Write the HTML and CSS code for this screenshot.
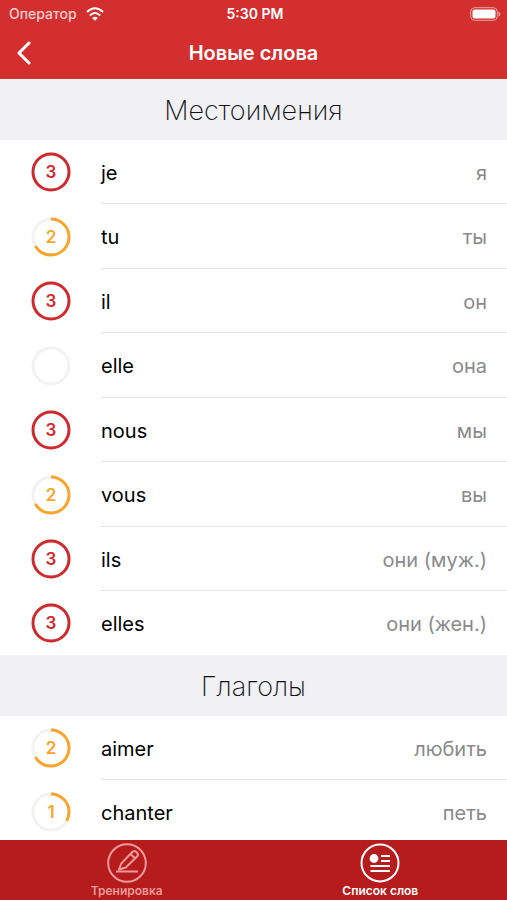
FILE: index.html
```
<!DOCTYPE html>
<html lang="ru">
<head>
    <meta charset="UTF-8">
    <meta name="viewport" content="width=device-width, initial-scale=1.0">
    <title>Новые слова</title>
    <link rel="stylesheet" href="styles.css">
</head>
<body>

    <!-- Header -->
    <header class="header">
        <div class="status">
            <div class="carrier">
                <span>Оператор</span>
                <svg class="wifi" viewBox="0 0 18 14">
                    <path d="M1 5 Q9 -2.600 17 5" />
                    <path d="M3.800 8.500 Q9 3.500 14.200 8.500" />
                    <path class="dot" d="M9 13.800 L6.200 10.900 Q9 8.400 11.800 10.900 Z" />
                </svg>
            </div>
            <span class="time">5:30 PM</span>
            <svg class="battery" viewBox="0 0 31 14">
                <rect class="shell" x="0.700" y="0.700" width="26.600" height="12.600" rx="4" />
                <rect class="charge" x="2.500" y="2.500" width="23" height="9" rx="2" />
                <path class="cap" d="M28.500 4.500 Q30.500 5.500 30.500 7 Q30.500 8.500 28.500 9.500 Z" />
            </svg>
        </div>
        <div class="navbar">
            <button class="back" type="button" aria-label="Назад">
                <svg viewBox="0 0 16 24"><path d="M13 2 L3 12 L13 22" /></svg>
            </button>
            <h1>Новые слова</h1>
        </div>
    </header>

    <!-- Word list -->
    <main class="content">
        <section>
            <h2>Местоимения</h2>
            <ul class="words">
                <li class="level-3">
                    <div class="progress">
                        <svg viewBox="0 0 40 40"><circle class="track" cx="20" cy="20" r="18" /><circle class="bar" cx="20" cy="20" r="18" pathLength="3" /></svg>
                        <span>3</span>
                    </div>
                    <div class="pair"><span lang="fr">je</span><span class="translation">я</span></div>
                </li>
                <li class="level-2">
                    <div class="progress">
                        <svg viewBox="0 0 40 40"><circle class="track" cx="20" cy="20" r="18" /><circle class="bar" cx="20" cy="20" r="18" pathLength="3" /></svg>
                        <span>2</span>
                    </div>
                    <div class="pair"><span lang="fr">tu</span><span class="translation">ты</span></div>
                </li>
                <li class="level-3">
                    <div class="progress">
                        <svg viewBox="0 0 40 40"><circle class="track" cx="20" cy="20" r="18" /><circle class="bar" cx="20" cy="20" r="18" pathLength="3" /></svg>
                        <span>3</span>
                    </div>
                    <div class="pair"><span lang="fr">il</span><span class="translation">он</span></div>
                </li>
                <li>
                    <div class="progress">
                        <svg viewBox="0 0 40 40"><circle class="track" cx="20" cy="20" r="18" /></svg>
                    </div>
                    <div class="pair"><span lang="fr">elle</span><span class="translation">она</span></div>
                </li>
                <li class="level-3">
                    <div class="progress">
                        <svg viewBox="0 0 40 40"><circle class="track" cx="20" cy="20" r="18" /><circle class="bar" cx="20" cy="20" r="18" pathLength="3" /></svg>
                        <span>3</span>
                    </div>
                    <div class="pair"><span lang="fr">nous</span><span class="translation">мы</span></div>
                </li>
                <li class="level-2">
                    <div class="progress">
                        <svg viewBox="0 0 40 40"><circle class="track" cx="20" cy="20" r="18" /><circle class="bar" cx="20" cy="20" r="18" pathLength="3" /></svg>
                        <span>2</span>
                    </div>
                    <div class="pair"><span lang="fr">vous</span><span class="translation">вы</span></div>
                </li>
                <li class="level-3">
                    <div class="progress">
                        <svg viewBox="0 0 40 40"><circle class="track" cx="20" cy="20" r="18" /><circle class="bar" cx="20" cy="20" r="18" pathLength="3" /></svg>
                        <span>3</span>
                    </div>
                    <div class="pair"><span lang="fr">ils</span><span class="translation">они (муж.)</span></div>
                </li>
                <li class="level-3">
                    <div class="progress">
                        <svg viewBox="0 0 40 40"><circle class="track" cx="20" cy="20" r="18" /><circle class="bar" cx="20" cy="20" r="18" pathLength="3" /></svg>
                        <span>3</span>
                    </div>
                    <div class="pair"><span lang="fr">elles</span><span class="translation">они (жен.)</span></div>
                </li>
            </ul>
        </section>

        <section>
            <h2>Глаголы</h2>
            <ul class="words">
                <li class="level-2">
                    <div class="progress">
                        <svg viewBox="0 0 40 40"><circle class="track" cx="20" cy="20" r="18" /><circle class="bar" cx="20" cy="20" r="18" pathLength="3" /></svg>
                        <span>2</span>
                    </div>
                    <div class="pair"><span lang="fr">aimer</span><span class="translation">любить</span></div>
                </li>
                <li class="level-1">
                    <div class="progress">
                        <svg viewBox="0 0 40 40"><circle class="track" cx="20" cy="20" r="18" /><circle class="bar" cx="20" cy="20" r="18" pathLength="3" /></svg>
                        <span>1</span>
                    </div>
                    <div class="pair"><span lang="fr">chanter</span><span class="translation">петь</span></div>
                </li>
            </ul>
        </section>
    </main>

    <!-- Tab bar -->
    <nav class="tabs">
        <a href="#training">
            <svg viewBox="0 0 40 40">
                <circle cx="20" cy="20" r="18.800" />
                <path d="M9 28.500 H31" />
                <path d="M12 26.500 L14.300 20.500 L25.500 8.800 Q27.300 7.300 29 8.800 L30.300 10 Q31.700 11.600 30.300 13.300 L18.800 24.500 Z" />
                <path d="M23.500 11 L28.200 15.400" />
            </svg>
            <span>Тренировка</span>
        </a>
        <a href="#words" class="active">
            <svg viewBox="0 0 40 40">
                <circle cx="20" cy="20" r="18.500" />
                <circle class="fill" cx="14" cy="15.500" r="4.400" />
                <path d="M21 13 H30 M21 18 H30 M10.500 23 H30 M10.500 28 H30" />
            </svg>
            <span>Список слов</span>
        </a>
    </nav>

</body>
</html>
```

FILE: styles.css
```
* { margin: 0; padding: 0; box-sizing: border-box; }
body {
    font-family: Inter, 'Noto Sans', sans-serif;
    background: #fff;
    color: #000;
    height: 100vh;
    display: flex;
    flex-direction: column;
}
svg { display: block; fill: none; }

/* Header */
.header {
    background: #d32f2f;
    color: #fff;
    padding-bottom: 1px;
}
.status {
    display: grid;
    grid-template-columns: 1fr auto 1fr;
    align-items: center;
    height: 27px;
    padding: 0 6px 0 9px;
    font-size: 14px;
}
.carrier {
    display: flex;
    align-items: center;
    gap: 9px;
    color: #f8cfcf;
    font-weight: 500;
}
.wifi { width: 18px; height: 14px; stroke: #fff; stroke-width: 2; }
.wifi .dot { fill: #fff; stroke: none; }
.time { font-weight: 600; }
.battery { width: 31px; height: 14px; justify-self: end; }
.battery .shell { stroke: #eda3a3; stroke-width: 1; }
.battery .charge { fill: #fff; }
.battery .cap { fill: #eda3a3; }

.navbar {
    display: grid;
    grid-template-columns: 48px 1fr 48px;
    align-items: center;
    height: 51px;
}
.navbar h1 {
    font-size: 20px;
    font-weight: 600;
    text-align: center;
}
.back {
    display: flex;
    justify-content: center;
    padding: 12px;
    border: none;
    background: none;
    cursor: pointer;
}
.back svg {
    width: 16px;
    height: 24px;
    stroke: #fff;
    stroke-width: 3;
    stroke-linecap: round;
    stroke-linejoin: round;
}

/* Word list */
.content {
    flex: 1;
    min-height: 0;
    overflow-y: auto;
    scrollbar-width: none;
}
.content h2 {
    background: #f0f0f5;
    color: #111;
    padding-top: 3px;
    font-size: 27px;
    font-weight: 200;
    line-height: 58px;
    text-align: center;
}
.words { list-style: none; }
.words li {
    display: flex;
    gap: 30px;
    height: 64px;
    padding-left: 31px;
}
.words li:nth-child(even):not(:last-child) { height: 65px; }
.pair {
    flex: 1;
    display: flex;
    justify-content: space-between;
    align-items: center;
    padding: 2px 20px 0 0;
    border-bottom: 1px solid #e4e4e6;
    font-size: 20px;
}
.words li:last-child .pair { border-bottom: none; }
.translation { color: #8a8a8c; }

/* Progress ring */
.progress {
    display: grid;
    place-items: center;
    width: 40px;
    font-size: 17px;
    font-weight: 600;
}
.progress svg, .progress span { grid-area: 1 / 1; }
.progress svg {
    width: 40px;
    height: 40px;
    stroke-width: 3;
    transform: rotate(-90deg);
}
.track { stroke: #f2f2f2; }
.bar { stroke: currentColor; }
.level-3 .progress { color: #cf2b2f; }
.level-2 .progress, .level-1 .progress { color: #f9a52b; }
.level-2 .bar { stroke-dasharray: 2 1; }
.level-1 .bar { stroke-dasharray: 1 2; }

/* Tab bar */
.tabs {
    display: flex;
    height: 60px;
    background: #b71c1c;
}
.tabs a {
    flex: 1;
    display: flex;
    flex-direction: column;
    align-items: center;
    gap: 1px;
    padding-top: 3px;
    color: #ee9a9a;
    font-size: 12px;
    font-weight: 600;
    line-height: 14px;
    text-decoration: none;
}
.tabs .active { color: #fff; }
.tabs svg {
    width: 40px;
    height: 40px;
    stroke: currentColor;
    stroke-width: 2;
    stroke-linejoin: round;
}
.tabs .fill { fill: currentColor; stroke: none; }
```
